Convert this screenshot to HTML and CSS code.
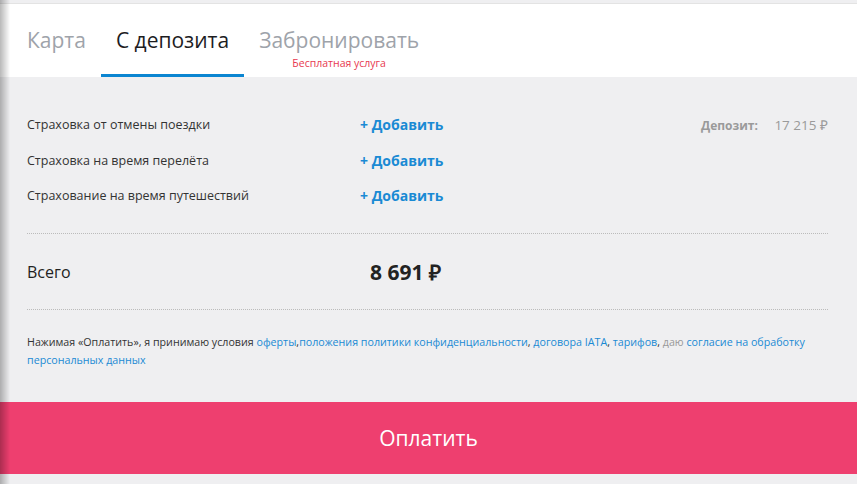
FILE: index.html
```html
<!DOCTYPE html>
<html lang="ru">
<head>
    <meta charset="UTF-8">
    <meta name="viewport" content="width=device-width, initial-scale=1.0">
    <title>Оплата</title>
    <link rel="stylesheet" href="styles.css">
</head>
<body>

<div class="page">
    <div class="tabs">
        <div class="tab">Карта</div>
        <div class="tab active">С депозита</div>
        <div class="tab">
            Забронировать
            <span class="tab-note">Бесплатная услуга</span>
        </div>
    </div>

    <div class="panel">
        <div class="extras">
            <div class="extra-row">
                <span class="extra-name">Страховка от отмены поездки</span>
                <a class="add-link" href="#">+ Добавить</a>
                <span class="deposit"><b>Депозит:</b> 17 215 ₽</span>
            </div>
            <div class="extra-row">
                <span class="extra-name">Страховка на время перелёта</span>
                <a class="add-link" href="#">+ Добавить</a>
            </div>
            <div class="extra-row">
                <span class="extra-name">Страхование на время путешествий</span>
                <a class="add-link" href="#">+ Добавить</a>
            </div>
        </div>

        <div class="total">
            <span class="total-label">Всего</span>
            <span class="total-sum">8 691 ₽</span>
        </div>

        <p class="terms">
            Нажимая «Оплатить», я принимаю условия <a href="#">оферты</a>,<a href="#">положения политики конфиденциальности</a>, <a href="#">договора IATA</a>, <a href="#">тарифов</a>, <span class="muted">даю</span> <a href="#">согласие на обработку персональных данных</a>
        </p>
    </div>

    <button type="button" class="pay-button">Оплатить</button>
</div>

</body>
</html>
```

FILE: styles.css
```css
body {
    margin: 0;
    font-family: "Open Sans", sans-serif;
    background-color: #efeff1;
    color: #333;
}

/* shadow along the left edge */
body::before {
    content: "";
    position: fixed;
    top: 0;
    left: 0;
    bottom: 0;
    width: 10px;
    background: linear-gradient(to right, rgba(0, 0, 0, 0.28), rgba(0, 0, 0, 0));
    pointer-events: none;
}

.page {
    min-height: 484px;
}

.tabs {
    display: flex;
    background-color: #fff;
    border-top: 1px solid #e3e3e3;
    margin-top: 3px;
    padding-left: 12px;
    height: 74px;
    box-sizing: border-box;
}

.tab {
    position: relative;
    padding: 21px 15px 0;
    font-size: 21px;
    line-height: 30px;
    color: #9ea3aa;
    border-bottom: 3px solid transparent;
}

.tab.active {
    color: #1d1d1f;
    border-bottom-color: #0b85d1;
}

.tab-note {
    display: block;
    text-align: center;
    font-size: 10.5px;
    line-height: 14px;
    color: #e8394f;
    margin-top: 1px;
}

.panel {
    padding: 30px 29px 33px 27px;
}

.extra-row {
    display: flex;
    align-items: center;
    height: 35.5px;
    font-size: 12.5px;
    color: #333;
}

.extra-name {
    width: 333px;
}

.add-link {
    color: #1a8ad4;
    font-weight: bold;
    font-size: 14px;
    text-decoration: none;
}

.deposit {
    margin-left: auto;
    color: #9a9a9a;
    font-size: 13.5px;
}

.deposit b {
    font-size: 12px;
    margin-right: 13px;
}

.extras {
    padding-bottom: 19px;
    border-bottom: 1px dotted #bbb;
}

.total {
    display: flex;
    align-items: center;
    height: 73px;
    padding-top: 2px;
    border-bottom: 1px dotted #bbb;
}

.total-label {
    width: 343px;
    font-size: 16px;
    color: #222;
}

.total-sum {
    font-size: 21px;
    font-weight: bold;
    color: #222;
}

.terms {
    margin: 23px 0 0;
    font-size: 10.7px;
    line-height: 18px;
    color: #333;
}

.terms a {
    color: #1a8ad4;
    text-decoration: none;
}

.terms .muted {
    color: #999;
}

.pay-button {
    display: block;
    width: 100%;
    height: 72px;
    border: none;
    background-color: #ee3f6f;
    color: #fff;
    font-family: "Open Sans", sans-serif;
    font-size: 21px;
    cursor: pointer;
}
```
